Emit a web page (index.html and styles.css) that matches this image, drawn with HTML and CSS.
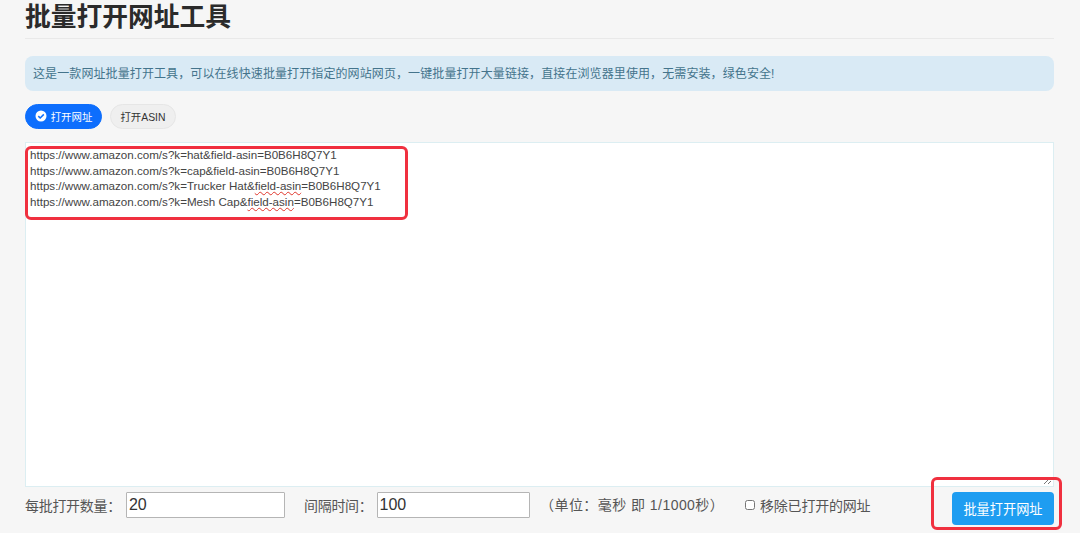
FILE: index.html
```html
<!DOCTYPE html>
<html lang="zh">
<head>
<meta charset="utf-8">
<title>批量打开网址工具</title>
<link rel="stylesheet" href="styles.css">
</head>
<body>
<main class="page">
  <h1 class="title">批量打开网址工具</h1>
  <p class="alert">这是一款网址批量打开工具，可以在线快速批量打开指定的网站网页，一键批量打开大量链接，直接在浏览器里使用，无需安装，绿色安全!</p>
  <div class="tabs">
    <button class="tab tab-active">
      <svg class="tab-icon" viewBox="0 0 12 12" aria-hidden="true"><circle cx="6" cy="6" r="5.5" fill="#fff"/><path d="M3.3 6.1 5.2 8 8.8 4.4" fill="none" stroke="#0d6efd" stroke-width="1.5"/></svg>
      打开网址
    </button>
    <button class="tab tab-plain">打开ASIN</button>
  </div>
  <div class="editor">
    <div class="line">https://www.amazon.com/s?k=hat&amp;field-asin=B0B6H8Q7Y1</div>
    <div class="line">https://www.amazon.com/s?k=cap&amp;field-asin=B0B6H8Q7Y1</div>
    <div class="line">https://www.amazon.com/s?k=Trucker Hat&amp;<span class="spell">field-asin</span>=B0B6H8Q7Y1</div>
    <div class="line">https://www.amazon.com/s?k=Mesh Cap&amp;<span class="spell">field-asin</span>=B0B6H8Q7Y1</div>
    <svg class="grip" viewBox="0 0 9 9" aria-hidden="true"><path d="M1 8 8 1M5 8 8 5" stroke="#777" stroke-width="1" fill="none"/></svg>
  </div>
  <div class="controls">
    <label class="field field-count">每批打开数量：<input class="num" type="text" value="20"></label>
    <label class="field field-gap">间隔时间：<input class="num" type="text" value="100"></label>
    <span class="unit">（单位：毫秒 即 1/1000秒）</span>
    <label class="check"><input class="box" type="checkbox">移除已打开的网址</label>
    <button class="submit">批量打开网址</button>
  </div>
</main>
<div class="mark mark-text"></div>
<div class="mark mark-btn"></div>
</body>
</html>
```
FILE: styles.css
```css
* { box-sizing: border-box; }
html, body { margin: 0; height: 533px; overflow: hidden; }
body {
  background: #f6f6f6;
  color: #333;
  font-family: "Liberation Sans", "Noto Sans CJK SC", sans-serif;
  position: relative;
}
.page { padding: 0 26px 0 25px; }
.title {
  margin: 0;
  height: 39px;
  border-bottom: 1px solid #e9e9e9;
  font-size: 25.75px;
  line-height: 34px;
  font-weight: 700;
  color: #2b2b2b;
}
.alert {
  margin: 17px 0 0;
  height: 35px;
  padding: 0 8px;
  border-radius: 8px;
  background: #d9eaf5;
  color: #44748c;
  font-size: 12px;
  letter-spacing: 0.1px;
  line-height: 36px;
}
.tabs { display: flex; gap: 8px; margin-top: 13px; }
.tab {
  display: flex;
  align-items: center;
  justify-content: center;
  gap: 4px;
  height: 25px;
  padding: 0;
  border: 1px solid #e6e6e6;
  border-radius: 13px;
  background: #efefef;
  color: #333;
  white-space: nowrap;
  font: 10.4px "Liberation Sans", "Noto Sans CJK SC", sans-serif;
}
.tab-active {
  width: 77px;
  border-color: #0d6efd;
  background: #0d6efd;
  color: #fff;
}
.tab-plain { width: 66px; }
.tab-icon { width: 12px; height: 12px; flex: none; margin-top: -1px; }
.editor {
  position: relative;
  height: 345px;
  margin-top: 13px;
  padding: 4px;
  background: #fff;
  border: 1px solid #dceef2;
  color: #444;
  font-size: 11.6px;
}
.line { height: 15.5px; line-height: 15.5px; white-space: nowrap; }
.spell { text-decoration: underline wavy #e0352b 1px; text-underline-offset: 1px; }
.grip { position: absolute; right: 1px; bottom: 1px; width: 9px; height: 9px; }
.controls {
  display: flex;
  align-items: flex-start;
  margin-top: 5px;
  font-size: 14px;
  color: #555;
}
.field { display: flex; align-items: center; height: 26px; letter-spacing: -0.3px; }
.field-count { width: 279px; }
.field-gap { width: 237px; }
.num {
  height: 26px;
  margin-left: 5px;
  padding: 0 2px;
  border: 1px solid #b5b5b5;
  border-radius: 1px;
  background: #fff;
  color: #333;
  letter-spacing: 0;
  font: 16px "Liberation Sans", sans-serif;
}
.field-count .num { width: 159px; }
.field-gap .num { width: 153px; margin-left: 4px; }
.unit { width: 204px; margin-left: -1px; margin-right: 1px; line-height: 26px; letter-spacing: 0.45px; white-space: nowrap; }
.check { display: flex; align-items: center; height: 26px; width: 207px; letter-spacing: -0.2px; }
.box { width: 10px; height: 10px; margin: 0 5px 0 0; }
.submit {
  width: 102px;
  height: 33px;
  border: 0;
  border-radius: 4px;
  background: #1e9df1;
  color: #fff;
  font: 13.2px "Liberation Sans", "Noto Sans CJK SC", sans-serif;
}
.mark { position: absolute; border: 3px solid #f0303f; border-radius: 6px; }
.mark-text { left: 25px; top: 146px; width: 383px; height: 74px; }
.mark-btn { left: 931px; top: 477px; width: 131px; height: 53px; }
```
